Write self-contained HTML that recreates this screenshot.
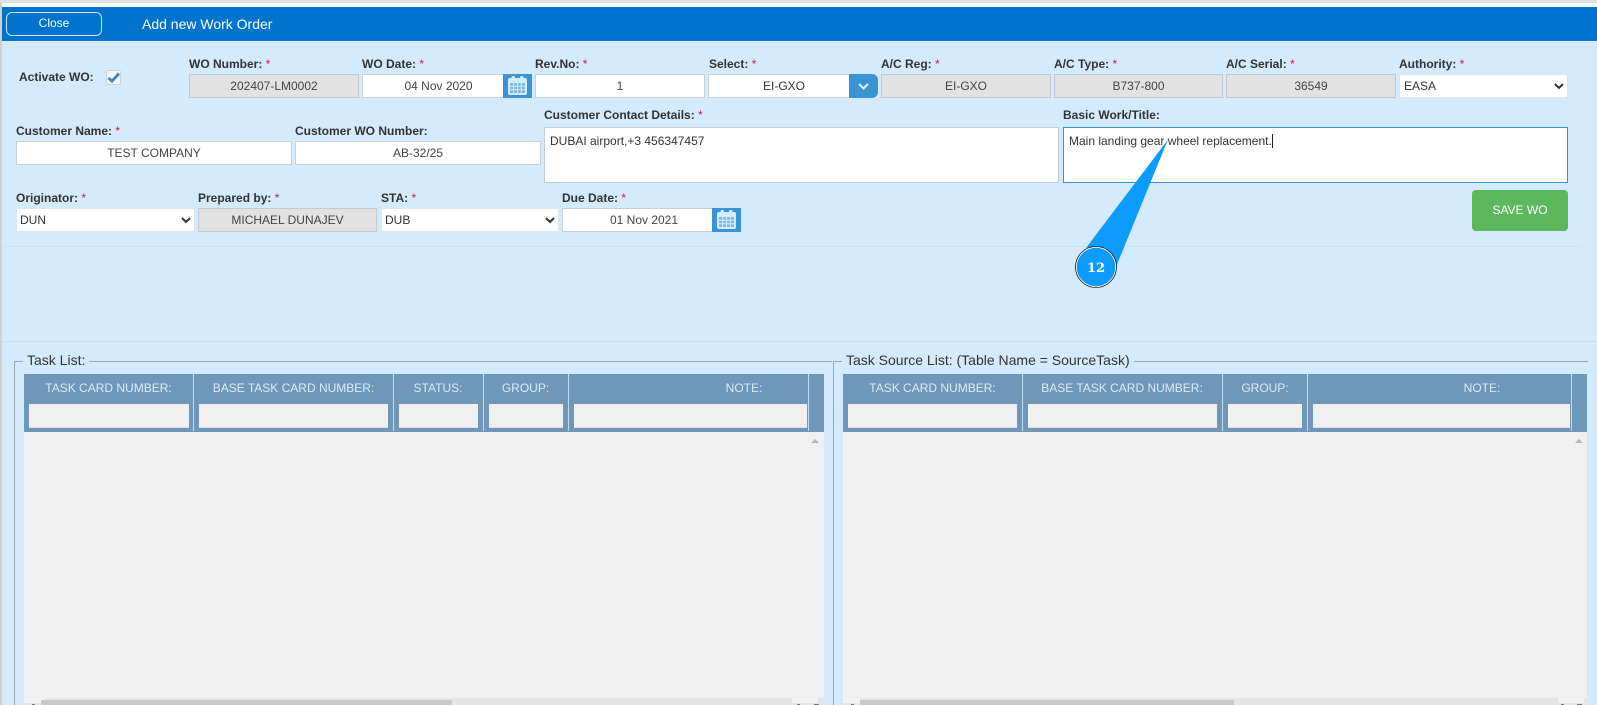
<!DOCTYPE html>
<html><head><meta charset="utf-8"><title>Add new Work Order</title>
<style>
html,body{margin:0;padding:0;width:1597px;height:705px;overflow:hidden;background:#fff}
body{position:relative;font:12px "Liberation Sans",Arial,sans-serif;color:#333}
div,span,input,select,textarea,button{box-sizing:border-box;font-family:"Liberation Sans",Arial,sans-serif}
.a{position:absolute}
.l{position:absolute;font-size:12px;font-weight:700;color:#333;line-height:14px;white-space:nowrap}
.l i{font-style:normal;font-weight:400;color:#d8124f}
.f{position:absolute;height:24px;background:#fff;border:1px solid #c5d0d9;font-size:12px;color:#444;text-align:center;line-height:22px;white-space:nowrap}
.d{background:#e2e2e2;border-color:#c3c9ce}
select.f{text-align:left;padding:0;border-color:#dde6ec;color:#333;background:#fff;border-radius:0;outline:none}
.ta{position:absolute;background:#fff;border:1px solid #c5cdd4;font-size:12px;line-height:14px;padding:6px 5px;color:#333;height:56px}
.cal{position:absolute;width:29px;height:24px;background:#3a93d3}
.th{position:absolute;top:381px;font-size:12px;line-height:14px;color:#d8ebfb;transform:translateX(-50%);white-space:nowrap}
.flt{position:absolute;top:404px;height:24px;background:#f0f0f0;border-bottom:1px solid #dfe3e6}
.sep{position:absolute;top:374px;width:1px;height:57px;background:#bcdcf5}
.gh{position:absolute;top:374px;height:58px;background:#7097b8}
.gb{position:absolute;top:432px;height:273px;background:#f0f0f0}
.sb{position:absolute;top:698px;height:7px;background:#e6e6e6}
.th2{position:absolute;top:700px;height:5px;background:#c8c8c8}
.up{position:absolute;top:439px;width:0;height:0;border-left:4px solid transparent;border-right:4px solid transparent;border-bottom:4px solid #b5b5b5}
.ar{position:absolute;top:704px;width:3px;height:1px;background:#777}
.pt{position:absolute;top:698px;height:5px;background:#f2f2f2}
.lg{position:absolute;top:353px;font-size:14px;line-height:15px;color:#333;white-space:nowrap;background:#d3ebfd;padding:0 4px}
</style></head>
<body>
<div class="a" style="left:0;top:0;width:1597px;height:3px;background:#dfe1e2"></div>
<div class="a" style="left:2px;top:7px;width:1595px;height:698px;background:#d3ebfd"></div>
<div class="a" style="left:0;top:3px;width:2px;height:702px;background:#cfcfcf"></div>
<div class="a" style="left:2px;top:7px;width:1595px;height:34px;background:#0073cc"></div>
<div class="a" style="left:6px;top:12px;width:96px;height:24px;border:1px solid #cfe6f8;border-radius:6px;color:#fff;text-align:center;line-height:20px;font-size:12px">Close</div>
<div class="a" style="left:142px;top:16px;color:#fff;font-size:14px;line-height:16px;white-space:nowrap">Add new Work Order</div>

<div class="l" style="left:19px;top:70px">Activate WO:</div>
<div class="a" style="left:106px;top:70px;width:15px;height:15px;background:#f2f6f9;border:1px solid #cdd5db;border-radius:2px"></div>
<svg class="a" style="left:106px;top:70px" width="15" height="15" viewBox="0 0 15 15"><path d="M2.500 8L6 11.200L13 3.500" fill="none" stroke="#3a87c8" stroke-width="2.800"/></svg>

<div class="l" style="left:189px;top:57px">WO Number: <i>*</i></div>
<div class="f d" style="left:189px;top:74px;width:170px">202407-LM0002</div>
<div class="l" style="left:362px;top:57px">WO Date: <i>*</i></div>
<div class="f" style="left:362px;top:74px;width:142px;border-right:0;padding-left:10px">04 Nov 2020</div>
<div class="cal" style="left:503px;top:74px"><svg width="29" height="24" viewBox="0 0 29 24"><rect x="5" y="4" width="19" height="17" rx="2" fill="#d3ebfd"/><rect x="8.500" y="2" width="3.500" height="4.500" rx="1.200" fill="#d3ebfd"/><rect x="17" y="2" width="3.500" height="4.500" rx="1.200" fill="#d3ebfd"/><path d="M7 9H22V19H7Z" fill="#7fb6e0"/><path d="M7 12.300H22M7 15.700H22M10.700 9V19M14.500 9V19M18.300 9V19" stroke="#d3ebfd" stroke-width="1"/></svg></div>
<div class="l" style="left:535px;top:57px">Rev.No: <i>*</i></div>
<div class="f" style="left:535px;top:74px;width:170px">1</div>
<div class="l" style="left:709px;top:57px">Select: <i>*</i></div>
<div class="f" style="left:708px;top:74px;width:142px;border-right:0;color:#333;padding-left:9px">EI-GXO</div>
<div class="a" style="left:849px;top:74px;width:29px;height:24px;background:#3a93d3;border-radius:0 6px 6px 0"><svg width="29" height="24" viewBox="0 0 29 24"><path d="M10 10L14.500 14.500L19 10" fill="none" stroke="#e8f4fd" stroke-width="2"/></svg></div>
<div class="l" style="left:881px;top:57px">A/C Reg: <i>*</i></div>
<div class="f d" style="left:881px;top:74px;width:170px">EI-GXO</div>
<div class="l" style="left:1054px;top:57px">A/C Type: <i>*</i></div>
<div class="f d" style="left:1054px;top:74px;width:169px">B737-800</div>
<div class="l" style="left:1226px;top:57px">A/C Serial: <i>*</i></div>
<div class="f d" style="left:1226px;top:74px;width:170px">36549</div>
<div class="l" style="left:1399px;top:57px">Authority: <i>*</i></div>
<select class="f" style="left:1399px;top:74px;width:169px"><option>EASA</option></select>

<div class="l" style="left:16px;top:124px">Customer Name: <i>*</i></div>
<div class="f" style="left:16px;top:141px;width:276px">TEST COMPANY</div>
<div class="l" style="left:295px;top:124px">Customer WO Number:</div>
<div class="f" style="left:295px;top:141px;width:246px">AB-32/25</div>
<div class="l" style="left:544px;top:108px">Customer Contact Details: <i>*</i></div>
<div class="ta" style="left:544px;top:127px;width:515px">DUBAI airport,+3 456347457</div>
<div class="l" style="left:1063px;top:108px">Basic Work/Title:</div>
<div class="ta" style="left:1063px;top:127px;width:505px;border-color:#3a93c8">Main landing gear wheel replacement.<span style="display:inline-block;width:1px;height:14px;background:#222;vertical-align:top"></span></div>

<div class="l" style="left:16px;top:191px">Originator: <i>*</i></div>
<select class="f" style="left:16px;top:208px;width:179px;text-indent:-1px"><option>DUN</option></select>
<div class="l" style="left:198px;top:191px">Prepared by: <i>*</i></div>
<div class="f d" style="left:198px;top:208px;width:179px">MICHAEL DUNAJEV</div>
<div class="l" style="left:381px;top:191px">STA: <i>*</i></div>
<select class="f" style="left:381px;top:208px;width:178px;text-indent:-1px"><option>DUB</option></select>
<div class="l" style="left:562px;top:191px">Due Date: <i>*</i></div>
<div class="f" style="left:562px;top:208px;width:151px;border-right:0;padding-left:12px">01 Nov 2021</div>
<div class="cal" style="left:712px;top:208px"><svg width="29" height="24" viewBox="0 0 29 24"><rect x="5" y="4" width="19" height="17" rx="2" fill="#d3ebfd"/><rect x="8.500" y="2" width="3.500" height="4.500" rx="1.200" fill="#d3ebfd"/><rect x="17" y="2" width="3.500" height="4.500" rx="1.200" fill="#d3ebfd"/><path d="M7 9H22V19H7Z" fill="#7fb6e0"/><path d="M7 12.300H22M7 15.700H22M10.700 9V19M14.500 9V19M18.300 9V19" stroke="#d3ebfd" stroke-width="1"/></svg></div>
<div class="a" style="left:1472px;top:190px;width:96px;height:41px;background:#5cb85c;border-radius:4px;color:#fff;text-align:center;line-height:41px;font-size:12px">SAVE WO</div>

<div class="a" style="left:2px;top:246px;width:1578px;height:1px;background:#cbe2f4"></div>
<div class="a" style="left:2px;top:341px;width:1595px;height:1px;background:#c8dff0"></div>

<!-- fieldsets -->
<div class="a" style="left:14px;top:361px;width:1px;height:344px;background:#93a9ba"></div>
<div class="a" style="left:14px;top:361px;width:818px;height:1px;background:#93a9ba"></div>
<div class="a" style="left:833px;top:361px;width:1px;height:344px;background:#93a9ba"></div>
<div class="a" style="left:833px;top:361px;width:755px;height:1px;background:#93a9ba"></div>
<div class="lg" style="left:23px">Task List:</div>
<div class="lg" style="left:842px">Task Source List: (Table Name = SourceTask)</div>

<!-- left grid -->
<div class="gh" style="left:24px;width:800px"></div>
<div class="gb" style="left:24px;width:800px"></div>
<div class="sep" style="left:193px"></div><div class="sep" style="left:393px"></div><div class="sep" style="left:483px"></div><div class="sep" style="left:568px"></div><div class="sep" style="left:808px"></div>
<div class="th" style="left:108.500px">TASK CARD NUMBER:</div>
<div class="th" style="left:293.500px">BASE TASK CARD NUMBER:</div>
<div class="th" style="left:438px">STATUS:</div>
<div class="th" style="left:525.500px">GROUP:</div>
<div class="th" style="left:744px">NOTE:</div>
<div class="flt" style="left:29px;width:160px"></div>
<div class="flt" style="left:199px;width:189px"></div>
<div class="flt" style="left:399px;width:79px"></div>
<div class="flt" style="left:489px;width:74px"></div>
<div class="flt" style="left:574px;width:233px"></div>
<div class="up" style="left:811px"></div>
<div class="sb" style="left:24px;width:800px"></div>
<div class="pt" style="left:24px;width:21px"></div>
<div class="pt" style="left:792px;width:26px"></div>
<div class="th2" style="left:41px;width:411px"></div>
<div class="ar" style="left:32px"></div><div class="ar" style="left:797px"></div><div class="ar" style="left:814px;width:5px"></div>

<!-- right grid -->
<div class="gh" style="left:843px;width:744px"></div>
<div class="gb" style="left:843px;width:744px"></div>
<div class="sep" style="left:1022px"></div><div class="sep" style="left:1222px"></div><div class="sep" style="left:1307px"></div><div class="sep" style="left:1571px"></div>
<div class="th" style="left:932.500px">TASK CARD NUMBER:</div>
<div class="th" style="left:1122px">BASE TASK CARD NUMBER:</div>
<div class="th" style="left:1265px">GROUP:</div>
<div class="th" style="left:1482px">NOTE:</div>
<div class="flt" style="left:848px;width:169px"></div>
<div class="flt" style="left:1028px;width:189px"></div>
<div class="flt" style="left:1228px;width:74px"></div>
<div class="flt" style="left:1313px;width:257px"></div>
<div class="up" style="left:1575px"></div>
<div class="sb" style="left:843px;width:744px"></div>
<div class="pt" style="left:843px;width:17px"></div>
<div class="pt" style="left:1558px;width:26px"></div>
<div class="th2" style="left:860px;width:374px"></div>
<div class="ar" style="left:851px"></div><div class="ar" style="left:1561px"></div><div class="ar" style="left:1577px;width:5px"></div>

<!-- callout -->
<svg class="a" style="left:1050px;top:130px" width="140" height="170" viewBox="1050 130 140 170">
<path d="M1168 139.500L1086 248L1116 267Z" fill="#0d9bff"/>
<circle cx="1096" cy="267" r="20" fill="#0d9bff" stroke="#fff" stroke-width="1.500"/>
<circle cx="1096" cy="267" r="20.500" fill="none" stroke="#111" stroke-width="0.800"/>
<text x="1096" y="272" text-anchor="middle" font-family="'DejaVu Serif','Liberation Serif',serif" font-weight="700" font-size="13" fill="#fff">12</text>
</svg>
</body></html>
